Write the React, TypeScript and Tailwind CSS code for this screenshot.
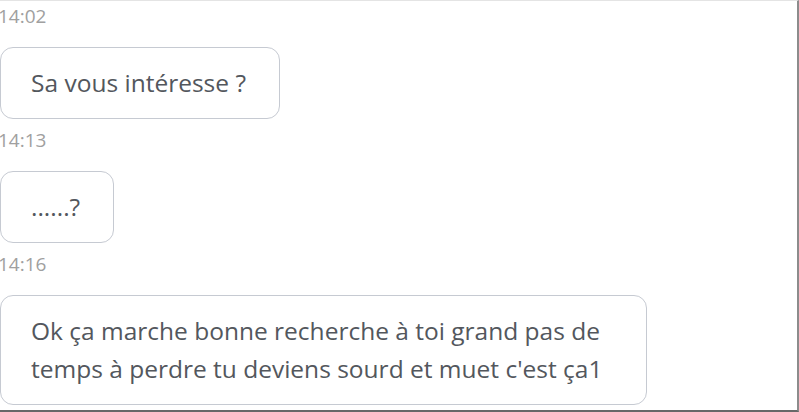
const messages = [
  { time: '14:02', text: 'Sa vous intéresse ?' },
  { time: '14:13', text: '......?' },
  {
    time: '14:16',
    text: "Ok ça marche bonne recherche à toi grand pas de temps à perdre tu deviens sourd et muet c'est ça1",
  },
];

export default function App() {
  return (
    <div
      className="h-[412px] w-[799px] overflow-hidden border-t border-t-[#e4e4e4] border-r-2 border-r-[#8c8c8c] border-b-2 border-b-[#686868] bg-white pt-[5px]"
      style={{ fontFamily: '"Open Sans", Lato, sans-serif' }}
    >
      <div className="flex flex-col">
        {messages.map((m, i) => (
          <div key={m.time} className={i === 0 ? '' : 'mt-[11px]'}>
            <div className="flex flex-col items-start">
              <span className="-ml-[2px] text-[19px] leading-[20px] text-[#a0a0a0]">{m.time}</span>
              <div className="mt-[21px] max-w-[647px] rounded-[13px] border border-[#c6cad2] bg-white py-[16px] pl-[30px] pr-[33px] text-[24.5px] leading-[38px] text-[#53575d]">
                {m.text}
              </div>
            </div>
          </div>
        ))}
      </div>
    </div>
  );
}
